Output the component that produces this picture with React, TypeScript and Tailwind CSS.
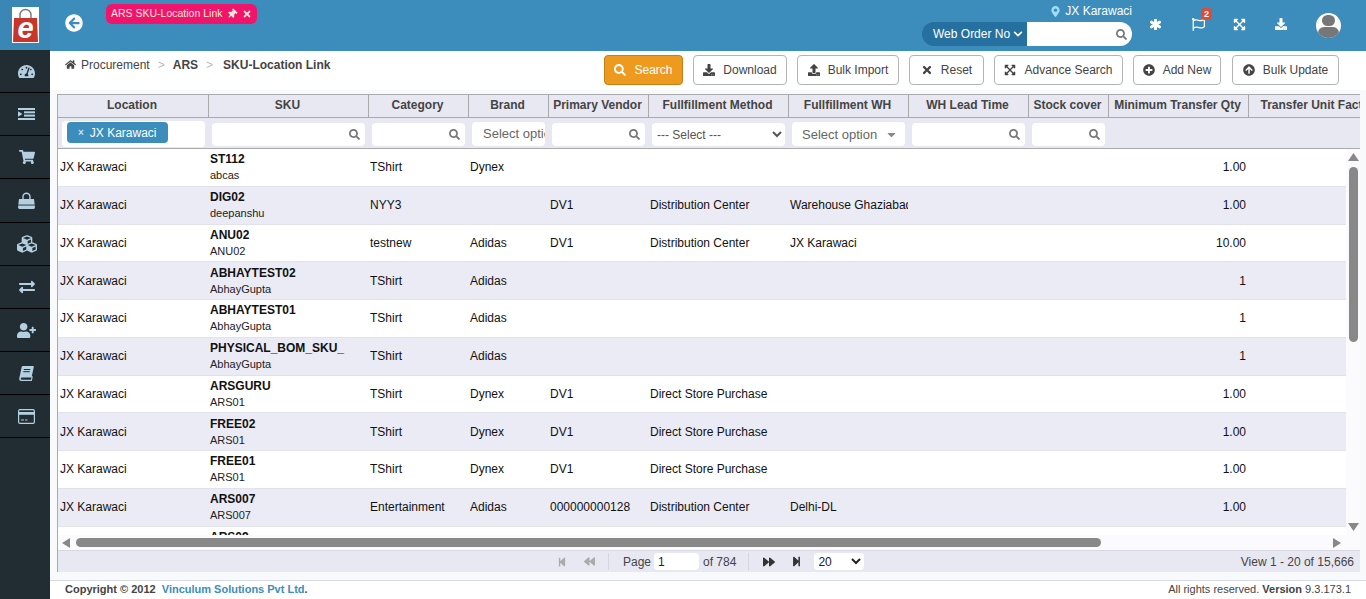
import {
  FaArrowCircleLeft, FaThumbtack, FaTimes, FaMapMarkerAlt, FaChevronDown, FaSearch, FaAsterisk, FaRegFlag,
  FaExpandArrowsAlt, FaDownload, FaTachometerAlt, FaShoppingCart, FaCubes,
  FaExchangeAlt, FaUserPlus, FaHome, FaUpload, FaPlusCircle, FaArrowCircleUp,
  FaStepBackward, FaBackward, FaForward, FaStepForward, FaCaretDown,
} from "react-icons/fa";

// column widths, same order for header, filter row and body
const W = ["w-[150px]", "w-[160px]", "w-[100px]", "w-[80px]", "w-[100px]", "w-[140px]", "w-[120px]", "w-[120px]", "w-[80px]", "w-[140px]", "w-[140px]"];
const HEADS = ["Location", "SKU", "Category", "Brand", "Primary Vendor", "Fullfillment Method", "Fullfillment WH", "WH Lead Time", "Stock cover", "Minimum Transfer Qty", "Transfer Unit Factor"];

const ROWS = [
  ["ST112", "abcas", "TShirt", "Dynex", "", "", "", "1.00"],
  ["DIG02", "deepanshu", "NYY3", "", "DV1", "Distribution Center", "Warehouse Ghaziabad", "1.00"],
  ["ANU02", "ANU02", "testnew", "Adidas", "DV1", "Distribution Center", "JX Karawaci", "10.00"],
  ["ABHAYTEST02", "AbhayGupta", "TShirt", "Adidas", "", "", "", "1"],
  ["ABHAYTEST01", "AbhayGupta", "TShirt", "Adidas", "", "", "", "1"],
  ["PHYSICAL_BOM_SKU_", "AbhayGupta", "TShirt", "Adidas", "", "", "", "1"],
  ["ARSGURU", "ARS01", "TShirt", "Dynex", "DV1", "Direct Store Purchase", "", "1.00"],
  ["FREE02", "ARS01", "TShirt", "Dynex", "DV1", "Direct Store Purchase", "", "1.00"],
  ["FREE01", "ARS01", "TShirt", "Dynex", "DV1", "Direct Store Purchase", "", "1.00"],
  ["ARS007", "ARS007", "Entertainment", "Adidas", "000000000128", "Distribution Center", "Delhi-DL", "1.00"],
  ["ARS09", "ARS09", "TShirt", "Dynex", "", "", "", "1.00"],
];

// the old font-awesome shapes that the icon package draws differently
const IndentIcon = () => (
  <svg viewBox="0 0 17 12" className="w-[17px] h-3" fill="currentColor">
    <rect width="17" height="2" />
    <rect x="6" y="3.3" width="11" height="2" />
    <rect x="6" y="6.6" width="11" height="2" />
    <rect y="10" width="17" height="2" />
    <path d="M0 3.2 L4.5 6 L0 8.8 Z" />
  </svg>
);
const BagIcon = () => (
  <svg viewBox="0 0 17 17" className="w-[17px] h-[17px]" fill="currentColor">
    <path d="M5 7 V4.8 a3.5 3.5 0 0 1 7 0 V7" fill="none" stroke="currentColor" strokeWidth="1.4" />
    <path d="M1 7 H16 L17 15 Q17 17 15.5 17 H1.5 Q0 17 0 15 Z" />
    <rect y="12.6" width="17" height="0.9" fill="#212d33" />
  </svg>
);
const BookIcon = () => (
  <svg viewBox="0 0 15 15" className="w-[15px] h-[15px]" fill="currentColor">
    <path d="M4 0 H14 Q15 0 14.8 1 L12.5 11.5 H3 Q1.8 11.5 1.7 12.8 Q1.8 13.8 3 13.8 H12 L12.8 10 L13.8 10.5 L12.8 15 H2.5 Q0 15 0.2 12.5 Q0.4 11 1 9 L2.6 1.2 Q2.9 0 4 0 Z" />
    <rect x="4.8" y="3" width="6.5" height="1" fill="#212d33" />
    <rect x="4.3" y="5.2" width="6.5" height="1" fill="#212d33" />
  </svg>
);
const CardIcon = () => (
  <svg viewBox="0 0 17 15" className="w-[17px] h-[15px]" fill="currentColor">
    <rect x="0.6" y="0.6" width="15.8" height="13.8" rx="1.4" fill="none" stroke="currentColor" strokeWidth="1.2" />
    <rect x="1" y="3" width="15" height="2.8" />
    <rect x="3" y="10.5" width="3" height="1" />
    <rect x="7" y="10.5" width="2.5" height="1" />
  </svg>
);

const NAV = [
  <FaTachometerAlt className="text-[17px]" />, <IndentIcon />, <FaShoppingCart className="text-[16px]" />, <BagIcon />,
  <FaCubes className="text-[20px]" />, <FaExchangeAlt className="text-[16px]" />, <FaUserPlus className="text-[19px]" />, <BookIcon />, <CardIcon />,
];

function Sidebar() {
  return (
    <aside className="w-[50px] shrink-0 bg-[#212d33] flex flex-col">
      <div className="h-[50px] bg-[#3a87b5] flex items-center justify-center">
        <div className="w-[27px] h-[36px] bg-white flex items-center justify-center">
          <svg viewBox="0 0 27 36" className="w-[27px] h-[36px]">
            <path d="M8 13 V8 a5.5 5.5 0 0 1 11 0 V13" fill="none" stroke="#777" strokeWidth="1.4" />
            <path d="M2 11 H25 L26 35 H1 Z" fill="#c8352b" />
            <text x="13.5" y="31" textAnchor="middle" fontSize="29" fontWeight="700" fontStyle="italic" fill="#fff" fontFamily="Liberation Sans, sans-serif">e</text>
          </svg>
        </div>
      </div>
      {NAV.map((icon, i) => (
        <div key={i} className={`${i === 3 ? "h-[44px]" : "h-[43px]"} pl-[3px] flex items-center justify-center border-b border-black text-[#b4cfe0]`}>
          {icon}
        </div>
      ))}
    </aside>
  );
}

function TopBar() {
  return (
    <header className="h-[51px] shrink-0 bg-[#3c8dbc] flex text-white">
      <FaArrowCircleLeft className="ml-[15px] mt-[14px] text-[18px]" />
      <div className="ml-[23px] mt-1 h-5 w-[151px] rounded-md bg-[#f0146a] text-[#ffe9dc] text-[10.5px] whitespace-nowrap flex items-center pl-[5px] gap-[5px]">
        <span>ARS SKU-Location Link</span>
        <FaThumbtack className="text-[10px] rotate-45" />
        <FaTimes className="text-[10px]" />
      </div>
      <div className="ml-auto w-[210px] flex flex-col items-end">
        <div className="h-[22px] flex items-center gap-[4px] text-xs">
          <FaMapMarkerAlt className="text-[11px] text-[#9fdcf5]" />
          <span>JX Karawaci</span>
        </div>
        <div className="h-6 w-full flex rounded-[12px] overflow-hidden text-xs">
          <div className="w-[105px] bg-[#25709f] flex items-center pl-[11px] gap-[3px]">
            <span>Web Order No</span>
            <FaChevronDown className="text-[10px]" />
          </div>
          <div className="flex-1 bg-white flex items-center justify-end pr-[5px] text-[#777]">
            <FaSearch className="text-[11px]" />
          </div>
        </div>
      </div>
      <div className="w-[234px] shrink-0 flex items-start pl-[18px] pt-[18px] text-[13px]">
        <FaAsterisk className="text-[11px] mt-px" stroke="currentColor" strokeWidth={50} />
        <div className="relative ml-[31px]">
          <FaRegFlag className="text-[13px]" />
          <span className="absolute left-[9px] -top-[10px] w-[11px] h-3 rounded-sm bg-[#dd4b39] text-[9px] font-bold leading-3 text-center">2</span>
        </div>
        <FaExpandArrowsAlt className="ml-[28px]" />
        <FaDownload className="ml-[29px] text-[12px]" />
        <div className="ml-[29px] -mt-[5px] w-[25px] h-[25px] rounded-full bg-white overflow-hidden flex flex-col items-center">
          <div className="w-[13px] h-[13px] rounded-full bg-[#777] mt-[2px]" />
          <div className="w-[21px] h-3 rounded-t-md bg-[#777] mt-[1px]" />
        </div>
      </div>
    </header>
  );
}

function Btn({ icon: Icon, label, w, primary }: { icon: any; label: string; w: string; primary?: boolean }) {
  return (
    <button
      className={`${w} h-[30px] rounded border flex items-center justify-center gap-[8px] text-xs ${
        primary ? "bg-[#ee9a1f] border-[#c57f15] text-white" : "bg-white border-[#b4b4b4] text-[#444]"
      }`}
    >
      <Icon className="text-[12px]" />
      {label}
    </button>
  );
}

function Toolbar() {
  return (
    <div className="h-[39px] shrink-0 bg-white flex">
      <div className="pl-[15px] h-[27px] flex items-center gap-[8px] text-xs text-[#444]">
        <span className="flex items-center gap-[5px]"><FaHome className="text-[11px]" />Procurement</span>
        <span className="text-[#bbb]">&gt;</span>
        <b>ARS</b>
        <span className="text-[#bbb]">&gt;</span>
        <b className="ml-[2px]">SKU-Location Link</b>
      </div>
      <div className="ml-auto pr-[27px] pt-1 flex gap-[10px]">
        <Btn icon={FaSearch} label="Search" w="w-[79px]" primary />
        <Btn icon={FaDownload} label="Download" w="w-[94px]" />
        <Btn icon={FaUpload} label="Bulk Import" w="w-[102px]" />
        <Btn icon={FaTimes} label="Reset" w="w-[75px]" />
        <Btn icon={FaExpandArrowsAlt} label="Advance Search" w="w-[129px]" />
        <Btn icon={FaPlusCircle} label="Add New" w="w-[88px]" />
        <div className="ml-px"><Btn icon={FaArrowCircleUp} label="Bulk Update" w="w-[107px]" /></div>
      </div>
    </div>
  );
}

function SearchBox({ w }: { w: string }) {
  return (
    <div className={`${w} h-[23px] mt-[5px] ml-1 rounded bg-white flex items-center justify-end pr-[5px] text-[#777] shrink-0`}>
      <FaSearch className="text-[11px]" />
    </div>
  );
}

function Filters() {
  return (
    <div className="h-[31px] flex bg-[#e8e8f2] border-b border-[#aaa]">
      <div className={`${W[0]} shrink-0 pl-1`}>
        <div className="w-[143px] h-[26px] mt-[3px] bg-white rounded pl-[5px] pt-[1px]">
          <div className="w-[101px] h-[21px] rounded bg-[#3c8dbc] text-white text-xs flex items-center pl-[11px] gap-[6px]">
            <span className="text-[10px] font-bold text-[#cfe0ea]">×</span>JX Karawaci
          </div>
        </div>
      </div>
      <div className={`${W[1]} shrink-0`}><SearchBox w="w-[153px]" /></div>
      <div className={`${W[2]} shrink-0`}><SearchBox w="w-[93px]" /></div>
      <div className={`${W[3]} shrink-0 pl-1`}>
        <div className="w-[73px] h-6 mt-[4px] bg-white rounded pl-[11px] text-[13px] leading-[23px] text-[#666] overflow-hidden whitespace-nowrap">Select option</div>
      </div>
      <div className={`${W[4]} shrink-0`}><SearchBox w="w-[93px]" /></div>
      <div className={`${W[5]} shrink-0 pl-1`}>
        <select className="w-[133px] h-[23px] mt-[5px] bg-white rounded text-xs text-[#555] pl-[1px]" defaultValue="s">
          <option value="s">--- Select ---</option>
        </select>
      </div>
      <div className={`${W[6]} shrink-0 pl-1`}>
        <div className="w-[113px] h-6 mt-[4px] bg-white rounded pl-[10px] pr-[7px] text-[13px] leading-[23px] text-[#666] flex justify-between items-center">
          Select option
          <FaCaretDown className="text-[13px] text-[#888]" />
        </div>
      </div>
      <div className={`${W[7]} shrink-0`}><SearchBox w="w-[113px]" /></div>
      <div className={`${W[8]} shrink-0`}><SearchBox w="w-[73px]" /></div>
    </div>
  );
}

function Row({ r, alt }: { r: string[]; alt: boolean }) {
  return (
    <div className={`h-[37.75px] shrink-0 flex items-center border-b border-[#e2e2ec] text-xs text-[#111] ${alt ? "bg-[#ebebf5]" : "bg-white"}`}>
      <div className={`${W[0]} shrink-0 px-[2px]`}>JX Karawaci</div>
      <div className={`${W[1]} shrink-0 px-[2px] overflow-hidden whitespace-nowrap`}>
        <div className="font-bold leading-[15px] mt-[1px]">{r[0]}</div>
        <div className="text-[11px] leading-[16px] text-[#222]">{r[1]}</div>
      </div>
      <div className={`${W[2]} shrink-0 px-[2px]`}>{r[2]}</div>
      <div className={`${W[3]} shrink-0 px-[2px]`}>{r[3]}</div>
      <div className={`${W[4]} shrink-0 px-[2px]`}>{r[4]}</div>
      <div className={`${W[5]} shrink-0 px-[2px]`}>{r[5]}</div>
      <div className={`${W[6]} shrink-0 pl-[2px] overflow-hidden whitespace-nowrap`}>{r[6]}</div>
      <div className={W[7] + " shrink-0"} />
      <div className={W[8] + " shrink-0"} />
      <div className={`${W[9]} shrink-0 px-[2px] text-right`}>{r[7]}</div>
    </div>
  );
}

function Grid() {
  return (
    <div className="mr-[6px] ml-[7px] flex-1 min-h-0 flex flex-col border-l border-[#aaa] bg-[#fbfbfd]">
      <div className="h-[24px] shrink-0 flex bg-[#e8e8f2] border-y border-[#aaa] overflow-hidden">
        {HEADS.map((h, i) => (
          <div key={h} className={`${W[i]} shrink-0 pr-[2px] ${i > 0 ? "border-l border-[#aaa]" : ""} text-center text-xs font-bold text-[#444] leading-[20px] whitespace-nowrap`}>{h}</div>
        ))}
      </div>
      <Filters />
      <div className="flex-1 min-h-0 flex">
        <div className="flex-1 min-w-0 overflow-hidden flex flex-col">
          {ROWS.map((r, i) => <Row key={i} r={r} alt={i % 2 === 1} />)}
        </div>
        <div className="w-[14px] shrink-0 flex flex-col items-center pt-[4px] pb-[4px]">
          <svg viewBox="0 0 11 8" className="w-[11px] h-2 fill-[#888]"><path d="M5.5 0 L11 8 H0 Z" /></svg>
          <div className="w-[9px] h-[175px] rounded-full bg-[#888] mt-[6px]" />
          <svg viewBox="0 0 11 8" className="w-[11px] h-2 fill-[#888] mt-auto"><path d="M0 0 H11 L5.5 8 Z" /></svg>
        </div>
      </div>
      <div className="h-[15px] shrink-0 flex items-center pl-[4px] pr-[19px]">
        <svg viewBox="0 0 8 10" className="w-2 h-[10px] fill-[#888]"><path d="M8 0 V10 L0 5 Z" /></svg>
        <div className="ml-[6px] w-[1025px] h-[9px] rounded-full bg-[#888]" />
        <svg viewBox="0 0 8 10" className="w-2 h-[10px] fill-[#888] ml-auto"><path d="M0 0 L8 5 L0 10 Z" /></svg>
      </div>
      <Pager />
    </div>
  );
}

function Pager() {
  return (
    <div className="h-[22px] shrink-0 flex items-center bg-[#e8e8f2] border-t border-[#d8d8e2] text-xs text-[#444]">
      <FaStepBackward className="ml-[499px] text-[10px] text-[#aaa]" />
      <FaBackward className="ml-[17px] text-[11px] text-[#aaa]" />
      <div className="ml-[13px] w-px h-[17px] bg-[#d5d5df]" />
      <span className="ml-[14px]">Page</span>
      <input className="ml-[3px] w-[45px] h-[17px] rounded bg-white text-xs text-[#222] pl-1 outline-none" defaultValue="1" />
      <span className="ml-1">of 784</span>
      <div className="ml-[12px] w-px h-[17px] bg-[#d5d5df]" />
      <FaForward className="ml-[14px] text-[12px] text-[#333]" />
      <FaStepForward className="ml-[16px] text-[11px] text-[#333]" />
      <select className="ml-[12px] w-[50px] h-[17px] rounded bg-white text-xs text-[#222]" defaultValue="20">
        <option>20</option>
      </select>
      <span className="ml-auto pr-[6px]">View 1 - 20 of 15,666</span>
    </div>
  );
}

export default function App() {
  return (
    <div className="h-[599px] flex overflow-hidden bg-[#f8f9fb] font-['Liberation_Sans',Arial,sans-serif]">
      <Sidebar />
      <div className="flex-1 min-w-0 flex flex-col">
        <TopBar />
        <Toolbar />
        <div className="h-[4px] shrink-0" />
        <Grid />
        <div className="h-[8px] shrink-0" />
        <footer className="h-[19px] shrink-0 bg-white border-t border-[#d5dbe3] flex items-center justify-between pl-[15px] pr-[15px] pb-[2px] text-[11px] text-[#444]">
          <span className="font-bold">Copyright © 2012 &nbsp;<span className="text-[#3c8dbc]">Vinculum Solutions Pvt Ltd</span>.</span>
          <span>All rights reserved. <b>Version</b> 9.3.173.1</span>
        </footer>
      </div>
    </div>
  );
}
